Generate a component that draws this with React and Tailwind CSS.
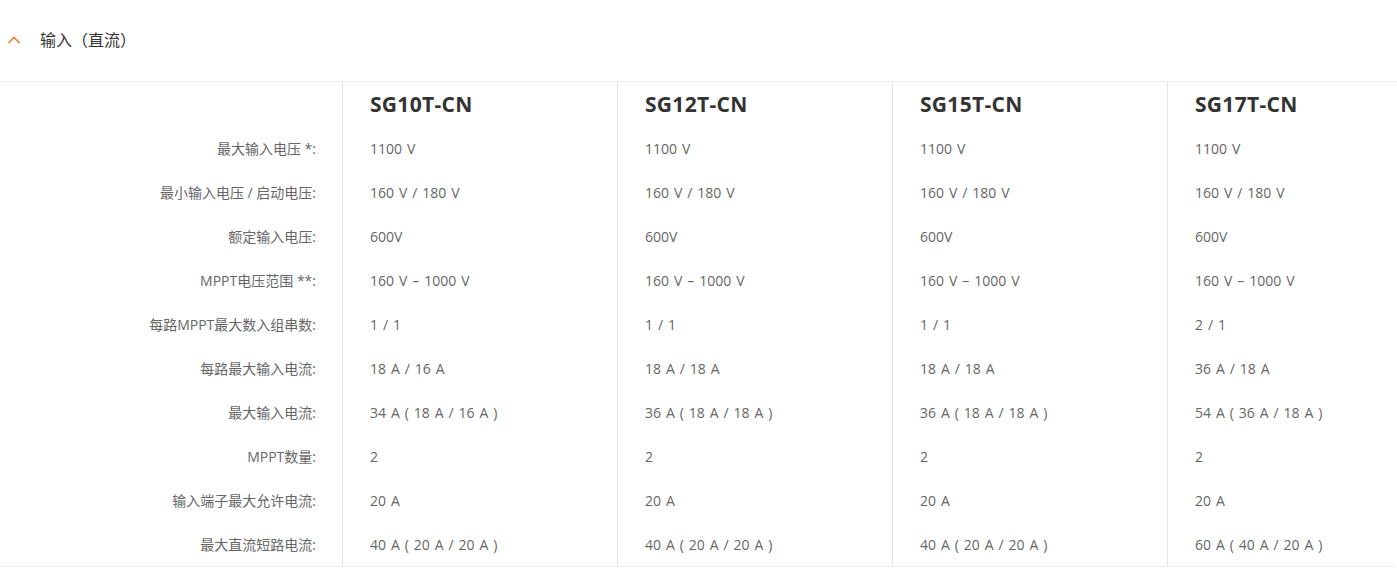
import React from "react";

const models = ["SG10T-CN", "SG12T-CN", "SG15T-CN", "SG17T-CN"];
const rows = [
  ["最大输入电压 *:", ["1100 V", "1100 V", "1100 V", "1100 V"]],
  ["最小输入电压 / 启动电压:", ["160 V / 180 V", "160 V / 180 V", "160 V / 180 V", "160 V / 180 V"]],
  ["额定输入电压:", ["600V", "600V", "600V", "600V"]],
  ["MPPT电压范围 **:", ["160 V – 1000 V", "160 V – 1000 V", "160 V – 1000 V", "160 V – 1000 V"]],
  ["每路MPPT最大数入组串数:", ["1 / 1", "1 / 1", "1 / 1", "2 / 1"]],
  ["每路最大输入电流:", ["18 A / 16 A", "18 A / 18 A", "18 A / 18 A", "36 A / 18 A"]],
  ["最大输入电流:", ["34 A ( 18 A / 16 A )", "36 A ( 18 A / 18 A )", "36 A ( 18 A / 18 A )", "54 A ( 36 A / 18 A )"]],
  ["MPPT数量:", ["2", "2", "2", "2"]],
  ["输入端子最大允许电流:", ["20 A", "20 A", "20 A", "20 A"]],
  ["最大直流短路电流:", ["40 A ( 20 A / 20 A )", "40 A ( 20 A / 20 A )", "40 A ( 20 A / 20 A )", "60 A ( 40 A / 20 A )"]],
];

export default function App() {
  return (
    <div
      className="w-[1397px] h-[569px] bg-white overflow-hidden"
      style={{ fontFamily: '"Open Sans", "Noto Sans CJK SC", sans-serif' }}
    >
      <div className="h-[82px] flex items-center border-b border-[#eeeeee]">
        <svg width="14" height="10" viewBox="0 0 14 10" className="ml-[7px] mt-[-2px]">
          <path d="M1.5 8 L7 2.5 L12.5 8" fill="none" stroke="#f07d2b" strokeWidth="1.6" />
        </svg>
        <span className="ml-[19px] text-[16px] text-[#333333] mt-[-1px]">输入（直流）</span>
      </div>
      <div className="grid grid-cols-[342px_275px_275px_275px_1fr] border-b border-[#eeeeee] w-[1395px]">
        <div className="h-[44px]" />
        {models.map((m) => (
          <div key={m} className="h-[44px] border-l border-[#e5e5e5] pl-[27px] flex items-center pt-[2px]">
            <span className="text-[21px] font-bold text-[#333333] tracking-[0.3px]">{m}</span>
          </div>
        ))}
        {rows.map(([label, vals]) => (
          <React.Fragment key={label}>
            <div className="h-[44px] flex items-center justify-end pr-[26px] text-[14px] text-[#666666]">
              {label}
            </div>
            {vals.map((v, i) => (
              <div key={i} className="h-[44px] border-l border-[#e5e5e5] pl-[27px] flex items-center text-[14px] text-[#666666] [word-spacing:1.3px]">
                {v}
              </div>
            ))}
          </React.Fragment>
        ))}
      </div>
    </div>
  );
}
